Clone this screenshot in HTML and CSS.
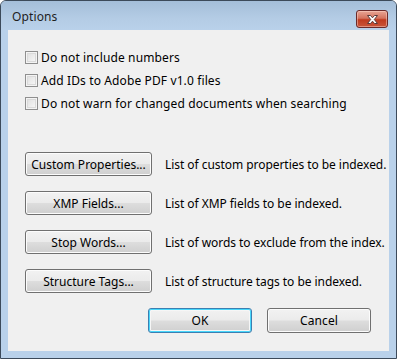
FILE: index.html
```html
<!DOCTYPE html>
<html>
<head>
<meta charset="utf-8">
<link rel="stylesheet" href="styles.css">
</head>
<body>
<div class="window">
  <div class="titlebar">
    <span class="title">Options</span>
    <div class="close">
      <svg width="17" height="11" viewBox="0 0 17 11">
        <path d="M3.5 1.5 L6.5 1.5 L8.5 3.8 L10.5 1.5 L13.5 1.5 L10.3 5.5 L13.5 9.5 L10.5 9.5 L8.5 7.2 L6.5 9.5 L3.5 9.5 L6.7 5.5 Z" fill="#ffffff" stroke="#5a3a3a" stroke-width="1" stroke-linejoin="round"/>
      </svg>
    </div>
  </div>
  <div class="content">
    <div class="checks">
      <label class="check"><span class="box"></span><span>Do not include numbers</span></label>
      <label class="check"><span class="box"></span><span>Add IDs to Adobe PDF v1.0 files</span></label>
      <label class="check"><span class="box"></span><span>Do not warn for changed documents when searching</span></label>
    </div>
    <div class="rows">
      <div class="row"><div class="btn wide">Custom Properties...</div><span class="desc">List of custom properties to be indexed.</span></div>
      <div class="row"><div class="btn wide">XMP Fields...</div><span class="desc">List of XMP fields to be indexed.</span></div>
      <div class="row"><div class="btn wide">Stop Words...</div><span class="desc">List of words to exclude from the index.</span></div>
      <div class="row"><div class="btn wide">Structure Tags...</div><span class="desc">List of structure tags to be indexed.</span></div>
    </div>
    <div class="actions">
      <div class="btn action default">OK</div>
      <div class="btn action">Cancel</div>
    </div>
  </div>
</div>
</body>
</html>
```
FILE: styles.css
```css
html, body {
  margin: 0;
  padding: 0;
  background: #ffffff;
}
body {
  font-family: "Noto Sans", "Open Sans", sans-serif;
  font-size: 12px;
  letter-spacing: 0.12px;
  color: #000000;
}
.window {
  width: 397px;
  height: 359px;
  box-sizing: border-box;
  border: 1px solid #3c4a5a;
  border-radius: 6px 6px 0 0;
  background: #b9d1ea;
  display: flex;
  flex-direction: column;
}
.titlebar {
  height: 29px;
  flex: none;
  display: flex;
  align-items: flex-start;
  justify-content: space-between;
  background: linear-gradient(#a4bed9, #b4cce5 60%, #b9d1ea);
  border-radius: 5px 5px 0 0;
}
.title {
  margin: 8px 0 0 11px;
  font-size: 12px;
  line-height: 16px;
  color: #1e1e1e;
}
.close {
  margin: 9px 8px 0 0;
  width: 30px;
  height: 16px;
  border: 1px solid #6b2a2a;
  border-radius: 3px;
  background: linear-gradient(#e8a595, #d4735f 45%, #c03a1f 55%, #c9553a);
  box-shadow: inset 0 0 0 1px rgba(255, 220, 210, 0.45);
  display: flex;
  align-items: center;
  justify-content: center;
}
.close svg {
  display: block;
}
.content {
  flex: 1;
  margin: 0 7px 7px 7px;
  background: #f0f0f0;
  padding: 21px 18px 0 17px;
  display: flex;
  flex-direction: column;
}
.checks {
  display: flex;
  flex-direction: column;
  gap: 10px;
}
.check {
  display: flex;
  align-items: center;
  height: 13px;
  gap: 3px;
  white-space: nowrap;
}
.box {
  width: 11px;
  height: 11px;
  flex: none;
  border: 1px solid #8f8f8f;
  background: linear-gradient(135deg, #dcdcdc, #fbfbfb);
  box-shadow: inset 0 0 0 1px #f4f4f4, inset 0 0 0 2px #dadada;
}
.rows {
  margin-top: 42px;
  display: flex;
  flex-direction: column;
  gap: 15px;
}
.row {
  display: flex;
  align-items: center;
  gap: 13px;
}
.btn {
  flex: none;
  box-sizing: border-box;
  border: 1px solid #707070;
  border-radius: 3px;
  background: linear-gradient(#f2f2f2, #ebebeb 48%, #dddddd 52%, #cfcfcf);
  box-shadow: inset 0 0 0 1px #fcfcfc;
  display: flex;
  align-items: center;
  justify-content: center;
  color: #000000;
  white-space: nowrap;
}
.wide {
  width: 127px;
  height: 24px;
  letter-spacing: 0;
}
.desc {
  white-space: nowrap;
  letter-spacing: -0.05px;
}
.actions {
  margin-top: 15px;
  display: flex;
  justify-content: flex-end;
  gap: 15px;
}
.action {
  width: 104px;
  height: 25px;
}
.default {
  border-color: #3c7fb1;
  box-shadow: inset 0 0 0 1px #48d7fb, inset 0 0 0 2px #f6f6f6;
}
```
